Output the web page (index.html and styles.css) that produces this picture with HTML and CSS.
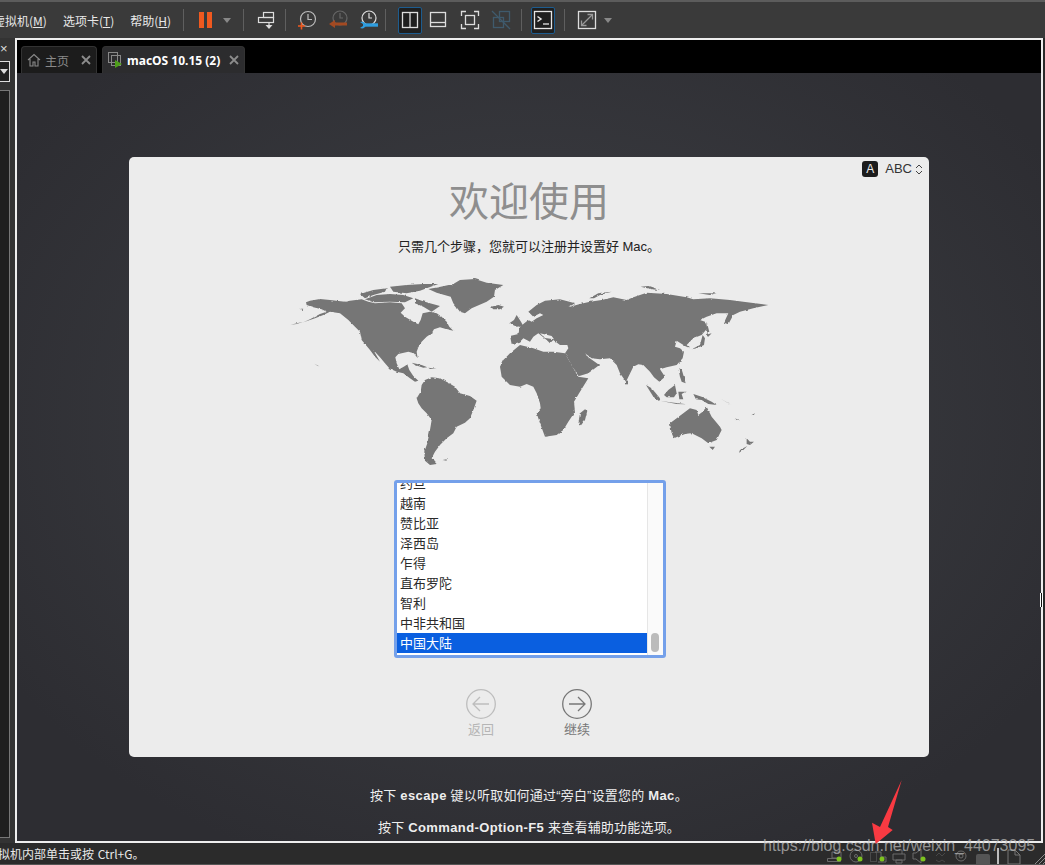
FILE: index.html
```html
<!DOCTYPE html>
<html lang="zh-CN">
<head>
<meta charset="utf-8">
<title>macOS 10.15 (2)</title>
<link rel="stylesheet" href="styles.css">
</head>
<body>
<div class="window">
  <header class="toolbar">
    <nav class="menu">
      <span class="menu-item first">虚拟机(<u>M</u>)</span>
      <span class="menu-item">选项卡(<u>T</u>)</span>
      <span class="menu-item">帮助(<u>H</u>)</span>
    </nav>
    <i class="sep"></i>
    <div class="group g-power">
      <svg width="30" height="20" viewBox="0 0 30 20"><rect x="8" y="2" width="5" height="16" fill="#f0591f"/><rect x="16" y="2" width="5" height="16" fill="#f0591f"/></svg>
      <i class="caret"></i>
    </div>
    <i class="sep"></i>
    <div class="group g-send">
      <svg width="20" height="20" viewBox="0 0 20 20" fill="none" stroke="#ddd" stroke-width="1.2"><rect x="8.500" y="2.500" width="10" height="5"/><rect x="3.500" y="7.500" width="15" height="5"/><path d="M10.500 15h7L14 19z" fill="#ddd" stroke="none"/><path d="M14 13v3"/></svg>
    </div>
    <i class="sep"></i>
    <div class="group g-snap">
      <svg width="30" height="22" viewBox="0 0 30 22" fill="none"><circle cx="16" cy="10" r="7.500" stroke="#bbb" stroke-width="1.200"/><path d="M16 5v5.500h4" stroke="#bbb" stroke-width="1.200"/><path d="M6 17h7M9.500 13.500v7" stroke="#f0591f" stroke-width="1.600"/></svg>
      <svg width="30" height="22" viewBox="0 0 30 22" fill="none"><circle cx="17" cy="9" r="7" stroke="#666" stroke-width="1.200"/><path d="M17 4v5h3" stroke="#666" stroke-width="1.200"/><path d="M11 15h13" stroke="#a34a22" stroke-width="3"/><path d="M6 15l6-4v8z" fill="#a34a22"/></svg>
      <svg width="30" height="22" viewBox="0 0 30 22" fill="none"><circle cx="15" cy="9" r="7" stroke="#ddd" stroke-width="1.200"/><path d="M15 4v5h3" stroke="#ddd" stroke-width="1.200"/><path d="M10 16h14" stroke="#2f9ee0" stroke-width="3.400"/><path d="M6 13c3-1 5 0 6 3-1 3-3 4-6 3l3-2v-2z" fill="#2f9ee0"/></svg>
    </div>
    <i class="sep"></i>
    <div class="group g-view">
      <span class="active-btn"><svg width="18" height="18" viewBox="0 0 18 18" fill="none" stroke="#ddd" stroke-width="1.300"><rect x="1.500" y="1.500" width="15" height="15"/><path d="M9 1.500v15"/></svg></span>
      <svg width="32" height="18" viewBox="0 0 32 18" fill="none" stroke="#ddd" stroke-width="1.300"><rect x="8.500" y="1.500" width="15" height="14"/><path d="M8.500 11.500h15"/></svg>
      <svg width="32" height="20" viewBox="0 0 32 20" fill="none" stroke="#ddd" stroke-width="1.300"><path d="M7.500 6V1.500H12M20 1.500h4.500V6M24.500 14v4.500H20M12 18.500H7.500V14"/><rect x="11.500" y="5.500" width="9" height="9"/></svg>
      <svg width="30" height="20" viewBox="0 0 30 20" fill="none" stroke="#3f5a6c" stroke-width="1.300"><rect x="13.500" y="1.500" width="10" height="10"/><rect x="7.500" y="7.500" width="10" height="10"/><path d="M6 1l18 18"/></svg>
    </div>
    <i class="sep"></i>
    <div class="group g-term">
      <span class="active-btn"><svg width="20" height="20" viewBox="0 0 20 20" fill="none" stroke="#e6e6e6" stroke-width="1.300"><rect x="1.500" y="1.500" width="17" height="17"/><path d="M4.500 6.500l3.500 2.500-3.500 2.500" stroke-width="1.500"/><path d="M10 14h6"/></svg></span>
    </div>
    <i class="sep"></i>
    <div class="group g-full">
      <svg width="20" height="20" viewBox="0 0 20 20" fill="none" stroke="#ddd" stroke-width="1.300"><rect x="1.500" y="1.500" width="17" height="17"/><path d="M5 15L15 5" stroke="#999"/><path d="M10.500 4.500h5v5M4.500 10.500v5h5" stroke="#999"/></svg>
      <i class="caret"></i>
    </div>
  </header>

  <div class="main">
    <aside class="sidebar">
      <div class="side-x">×</div>
      <div class="side-select"><i class="side-caret"></i></div>
      <div class="side-panel"></div>
    </aside>
    <section class="frame">
      <div class="tabs">
        <div class="tab tab-home">
          <svg width="14" height="14" viewBox="0 0 14 14" fill="none" stroke="#8a8a8a" stroke-width="1.100"><path d="M1 7l6-5.500L13 7M3 6v7h3V9h2v4h3V6"/></svg>
          <span class="tab-label">主页</span>
          <svg class="tab-close" width="10" height="10" viewBox="0 0 10 10" stroke="#8c8c8c" stroke-width="1.800"><path d="M1 1l8 8M9 1l-8 8"/></svg>
        </div>
        <div class="tab tab-vm">
          <svg width="15" height="16" viewBox="0 0 15 16" fill="none"><rect x=".5" y=".5" width="9" height="10" stroke="#888"/><rect x="3.500" y="3.500" width="9" height="10" stroke="#888"/><path d="M7 8l7 4-7 4z" fill="#4e9e1a"/></svg>
          <span class="tab-label strong">macOS 10.15 (2)</span>
          <svg class="tab-close" width="10" height="10" viewBox="0 0 10 10" stroke="#8c8c8c" stroke-width="1.800"><path d="M1 1l8 8M9 1l-8 8"/></svg>
        </div>
      </div>
      <div class="guest">
        <div class="card">
          <div class="input-source"><span class="input-a">A</span><span>ABC</span><svg width="8" height="13" viewBox="0 0 8 13" fill="none" stroke="#444" stroke-width="1"><path d="M1 5L4 2l3 3M1 8l3 3 3-3"/></svg></div>
          <h1 class="title">欢迎使用</h1>
          <p class="subtitle">只需几个步骤，您就可以注册并设置好 Mac。</p>
          <svg class="map" width="490" height="200" viewBox="290 270 490 200" fill="#767676">
            <defs>
              <filter id="coast" filterUnits="userSpaceOnUse" x="290" y="270" width="490" height="200">
                <feTurbulence type="fractalNoise" baseFrequency=".22" numOctaves="2" seed="4"/>
                <feDisplacementMap in="SourceGraphic" scale="2.4" xChannelSelector="R" yChannelSelector="G"/>
                <feGaussianBlur stdDeviation=".3"/>
              </filter>
            </defs>
            <g filter="url(#coast)">
              <g transform="translate(290 270) scale(.3333)">
                <path d="M48,97 60,92 90,87 120,90 165,95 180,92 215,88 235,95 255,100 300,97 335,100 345,115 332,128 345,140 370,155 385,163 392,150 398,130 420,125 440,130 455,140 470,155 478,170 490,182 470,178 450,172 432,178 425,190 410,200 395,215 385,232 380,245 383,265 372,250 355,245 325,252 316,262 320,280 328,298 345,288 352,283 358,300 370,318 385,332 375,335 360,325 340,310 320,305 298,295 285,280 270,262 250,240 270,275 255,260 240,240 215,210 210,185 195,170 175,150 150,130 120,125 100,135 75,145 40,157 60,148 90,132 110,125 95,118 70,112 50,105Z"/>
                <path d="M2,164 40,155 20,162Z"/>
                <path d="M28,116 40,116 38,120Z"/>
                <path d="M73,281 92,291 80,286Z"/>
                <path d="M210,72 250,60 290,55 285,65 250,75 225,85Z"/>
                <path d="M300,50 350,45 400,42 445,42 410,55 390,62 350,70 310,65Z"/>
                <path d="M225,88 260,75 300,72 340,75 370,85 345,97 300,95 250,97Z"/>
                <path d="M375,85 395,92 420,100 450,108 425,125 400,110 375,100Z"/>
                <path d="M415,57 445,52 490,42 510,30 555,27 590,38 640,45 615,60 612,80 590,95 545,115 525,130 510,125 490,100 482,80 440,68Z"/>
                <path d="M603,110 625,105 642,110 630,118 610,118Z"/>
                <path d="M365,278 395,285 412,292 400,293 375,285Z"/>
                <path d="M415,293 440,296 420,297Z"/>
                <path d="M380,385 392,365 395,345 405,330 425,322 450,325 475,338 495,350 510,370 540,378 560,392 550,420 540,445 525,458 500,470 490,490 470,505 450,525 435,545 425,565 440,582 420,585 405,572 403,545 412,520 420,480 425,450 410,430 395,415 385,400Z"/>
                <path d="M458,570 470,568 470,572Z"/>
                <path d="M658,160 672,150 680,135 693,155 700,168 680,170Z"/>
              </g>
              <g transform="translate(520 270) scale(.3333)">
                <path d="M40,235 0,225 -30,250 -50,270 -60,290 -55,320 -30,345 0,350 20,342 40,350 50,370 60,400 62,415 50,430 60,460 75,500 110,495 130,480 145,455 165,425 162,395 180,365 205,325 175,320 160,295 135,250 100,245 70,245Z"/>
                <path d="M195,418 202,422 195,450 183,466 175,460 180,430Z"/>
                <path fill-rule="evenodd" d="M-30,198 -5,192 0,170 25,150 35,155 50,145 70,135 60,130 40,140 25,125 50,105 75,92 120,88 165,100 145,112 180,102 210,95 245,90 280,82 320,90 340,82 380,68 440,72 500,82 520,88 570,85 630,90 670,95 745,105 700,115 660,125 640,135 625,163 612,158 625,130 590,130 560,140 540,150 555,155 562,175 545,195 520,205 500,225 510,235 495,228 470,212 465,230 480,235 492,245 488,265 470,285 440,292 420,298 435,320 418,335 402,322 390,305 370,285 355,283 340,290 318,335 300,310 290,285 270,265 240,268 215,265 195,250 205,262 238,285 205,310 178,318 160,295 135,250 145,235 142,225 120,225 100,210 90,220 80,210 55,190 40,200 30,215 10,205 0,215 -25,222Z M60,190 95,198 102,208 75,204Z"/>
                <path d="M208,85 235,70 275,65 240,75 222,85Z"/>
                <path d="M362,50 385,48 420,60 395,58Z"/>
                <path d="M535,70 590,70 570,75Z"/>
                <path d="M560,155 568,185 558,190Z"/>
                <path d="M515,238 540,225 548,195 555,205 552,225 530,235Z"/>
                <path d="M555,195 575,190 565,200Z"/>
                <path d="M478,270 483,272 478,280Z"/>
                <path d="M475,295 485,298 490,315 497,340 485,335 480,320Z"/>
                <path d="M378,345 395,355 420,385 420,395 400,380Z"/>
                <path d="M420,392 450,397 500,403 470,402Z"/>
                <path d="M432,375 445,360 465,345 470,370 462,382 440,382Z"/>
                <path d="M475,365 497,365 485,372 490,388 478,388Z"/>
                <path d="M520,372 545,380 575,395 590,405 565,402 545,390 528,388Z"/>
                <path d="M600,385 635,405 620,397Z"/>
                <path d="M645,445 660,452 650,450Z"/>
                <path d="M695,435 705,430 700,437Z"/>
                <path d="M318,332 324,332 324,343 318,343Z"/>
                <path d="M450,460 470,445 490,430 510,415 530,420 535,435 548,425 560,410 575,440 600,470 605,480 590,510 565,520 545,505 515,490 490,493 462,505 455,490Z"/>
                <path d="M568,530 585,530 578,540Z"/>
                <path d="M680,505 690,515 702,515 690,525 680,522Z"/>
                <path d="M682,528 670,540 657,548 660,540Z"/>
              </g>
            </g>
          </svg>
          <div class="listbox">
            <ul class="rows">
              <li>约旦</li>
              <li>越南</li>
              <li>赞比亚</li>
              <li>泽西岛</li>
              <li>乍得</li>
              <li>直布罗陀</li>
              <li>智利</li>
              <li>中非共和国</li>
              <li class="selected">中国大陆</li>
            </ul>
            <div class="scrollbar"><i class="thumb"></i></div>
          </div>
          <div class="nav">
            <div class="nav-btn off">
              <svg width="30" height="30" viewBox="0 0 30 30" fill="none" stroke="#bdbdbd" stroke-width="1.300"><circle cx="15" cy="15" r="14.300"/><path d="M23 15H7M14 8l-7 7 7 7"/></svg>
              <span>返回</span>
            </div>
            <div class="nav-btn">
              <svg width="30" height="30" viewBox="0 0 30 30" fill="none" stroke="#777" stroke-width="1.300"><circle cx="15" cy="15" r="14.300"/><path d="M7 15h16M16 8l7 7-7 7"/></svg>
              <span>继续</span>
            </div>
          </div>
        </div>
        <p class="hint h1">按下 <b class="key">escape</b> 键以听取如何通过“旁白”设置您的 <b class="key">Mac</b>。</p>
        <p class="hint h2">按下 <b class="key">Command-Option-F5</b> 来查看辅助功能选项。</p>
      </div>
    </section>
  </div>

  <footer class="status">
    <span class="status-text">拟机内部单击或按 Ctrl+G。</span>
    <div class="tray">
      <svg width="218" height="16" viewBox="827 848 218 16" fill="none" stroke="#6a6a6a" stroke-width="1">
        <path d="M832 852h9v6h-9zM827.500 858.500h13v3h-13z"/>
        <circle cx="856" cy="856" r="6"/><circle cx="856" cy="856" r="1.500"/>
        <path d="M870.500 852.500h6v9h-6z" stroke-dasharray="1 1"/><path d="M875 852h6v5h5v5h-8"/>
        <path d="M893 854h12v6h-12zM896 850h6v4M896 860h6v3h-6z"/>
        <path d="M913 853v6h3l5 4V849l-5 4z"/>
        <path d="M936 856l3-3 3 3 3-3M936 860l3 2 3-2 3 2" stroke="#484848"/>
        <circle cx="961" cy="856" r="5"/><circle cx="961" cy="856" r="2"/>
        <path d="M1008 850h7l5 5v9h-12zM1015 850v5h5" stroke="#777"/>
        <path d="M1034 865l11-11M1038 865l7-7M1042 865l3-3" stroke="#8a8a8a"/>
        <path d="M976 856q0-2 2-2h10q2 0 2 2v8h-14z" fill="#555" stroke="none"/>
        <path d="M998 848v16" stroke="#eee" stroke-width="1.500"/>
        <circle cx="839" cy="859" r="2.500" fill="#7ec41f" stroke="none"/>
        <circle cx="860" cy="859" r="2.500" fill="#7ec41f" stroke="none"/>
        <circle cx="882" cy="859" r="2.500" fill="#7ec41f" stroke="none"/>
        <circle cx="923" cy="859" r="2.500" fill="#7ec41f" stroke="none"/>
      </svg>
    </div>
  </footer>

  <div class="watermark">https://blog.csdn.net/weixin_44073095</div>
  <svg class="arrow" width="36" height="70" viewBox="0 0 36 70"><path d="M33.700 1L20 48l4.700 3L7.700 65 4 43.700l8 4.300Z" fill="#f93a42"/></svg>
  <i class="resize-cursor"></i>
</div>
</body>
</html>
```
FILE: styles.css
```css
* { box-sizing: border-box; }
html, body { margin: 0; padding: 0; }
body {
  width: 1045px;
  height: 865px;
  overflow: hidden;
  background: #2a2a2a;
  font-family: "Noto Sans CJK SC", "Noto Sans", sans-serif;
}
.window {
  position: relative;
  width: 1045px;
  height: 865px;
  display: flex;
  flex-direction: column;
  overflow: hidden;
}

/* toolbar */
.toolbar {
  height: 38px;
  flex: none;
  display: flex;
  align-items: center;
  background: #3a3a3a;
  border-top: 2px solid #5c5c5c;
  color: #eee;
}
.menu { display: flex; width: 183px; flex: none; font-size: 12px; color: #e8e8e8; white-space: nowrap; }
.menu-item { margin-left: 16px; }
.menu-item.first { margin-left: -7px; }
.sep { width: 1px; height: 22px; background: #5f5f5f; flex: none; }
.group { display: flex; align-items: center; flex: none; height: 36px; }
.group svg { flex: none; }
.caret {
  width: 0; height: 0; flex: none;
  border-left: 4px solid transparent;
  border-right: 4px solid transparent;
  border-top: 5px solid #888;
}
.g-power { width: 59px; padding-left: 7px; }
.g-power .caret { margin-left: 2px; }
.g-send { width: 41px; justify-content: center; }
.g-snap { width: 99px; padding-left: 6px; gap: 1px; }
.g-view { width: 135px; padding-left: 12px; }
.g-term { width: 42px; padding-left: 9px; }
.g-full { width: 60px; padding-left: 12px; gap: 7px; }
.active-btn {
  width: 24px; height: 27px; flex: none;
  display: flex; align-items: center; justify-content: center;
  background: #1f1f1f;
  border: 1px solid #1d5c8f;
  border-radius: 2px;
}

/* main */
.main { flex: 1; min-height: 0; display: flex; }
.sidebar {
  width: 15px; flex: none;
  background: #333;
  display: flex; flex-direction: column;
  overflow: hidden;
}
.side-x { height: 23px; color: #ddd; font-size: 13px; line-height: 22px; font-family: "Liberation Sans", sans-serif; }
.side-select {
  width: 10px; height: 21px; flex: none;
  border: 1px solid #ddd; border-left: 0;
  background: #222;
  position: relative;
}
.side-caret { position: absolute; left: 0; top: 7px; width: 0; height: 0;
  border-left: 4px solid transparent; border-right: 4px solid transparent; border-top: 5px solid #ddd; }
.side-panel { margin-top: 8px; width: 10px; height: 748px; flex: none; background: #1f1f1f; border: 1px solid #777; border-left: 0; }
.frame {
  width: 1028px; flex: none;
  border: 2px solid #eee;
  display: flex; flex-direction: column;
  background: #000;
}
.tabs { height: 33px; flex: none; display: flex; align-items: flex-end; gap: 5px; padding-left: 4px; background: #000; }
.tab {
  height: 27px;
  display: flex; align-items: center;
  border: 1px solid #333; border-bottom: 0;
  border-radius: 4px 4px 0 0;
  padding-left: 5px;
  font-size: 12px;
}
.tab-home { width: 76px; background: #1c1c1c; color: #8a8a8a; }
.tab-vm { width: 143px; background: #2c2c2e; color: #fff; }
.tab-label { margin-left: 4px; flex: 1; white-space: nowrap; }
.tab-label.strong { font-weight: 700; font-family: "Noto Sans", sans-serif; font-size: 12px; }
.tab-close { margin-right: 5px; flex: none; }

.guest {
  flex: 1; min-height: 0;
  padding-top: 84px;
  background: radial-gradient(ellipse 620px 480px at 50% 45%, #3f4045 0%, #37383d 45%, #2d2d32 100%);
}

/* card */
.card {
  position: relative;
  width: 800px; height: 600px;
  margin: 0 auto;
  padding-top: 18px;
  background: #ececec;
  border-radius: 5px;
  display: flex; flex-direction: column; align-items: center;
}
.input-source {
  position: absolute; top: 4px; right: 6px;
  display: flex; align-items: center; gap: 7px;
  font-size: 13px; line-height: 16px; color: #333;
  font-family: "Liberation Sans", sans-serif;
}
.input-source svg { margin-left: -4px; }
.input-a {
  width: 16px; height: 16px; border-radius: 3px;
  background: #1c1c1c; color: #eee;
  text-align: center; font-size: 12px; line-height: 16px;
}
.title { margin: 0; font-size: 40px; line-height: 48px; font-weight: 400; color: #8e8e8e; }
.subtitle {
  margin: 14px 0 0; font-size: 13px; line-height: 20px; color: #222;
  font-family: "Liberation Sans", "Noto Sans CJK SC", sans-serif;
}
.map { margin: 13px 0 0 12px; flex: none; }
.listbox {
  margin: 10px 0 0 2px;
  width: 272px; height: 178px; flex: none;
  border: 3px solid #74a0ea;
  border-radius: 3px;
  background: #fff;
  display: flex;
  overflow: hidden;
}
.rows { list-style: none; margin: -10px 0 0; padding: 0; width: 250px; flex: none; }
.rows li { height: 20px; padding-left: 3px; font-size: 13px; line-height: 20px; color: #2a2a2a; }
.rows li.selected { background: #0a5fe0; color: #fff; }
.scrollbar { flex: 1; background: #fafafa; border-left: 1px solid #e6e6e6; position: relative; }
.thumb { position: absolute; left: 3px; top: 150px; width: 8px; height: 19px; border-radius: 4px; background: #bbb; }
.nav { margin-top: 31px; display: flex; gap: 36px; }
.nav-btn { width: 60px; display: flex; flex-direction: column; align-items: center; font-size: 13px; line-height: 18px; color: #777; }
.nav-btn svg { margin-bottom: 1px; }
.nav-btn.off { color: #b5b5b5; }

.hint {
  margin: 0; text-align: center; font-size: 13px; line-height: 20px; color: #eee; letter-spacing: .2px;
  font-family: "Liberation Sans", "Noto Sans CJK SC", sans-serif;
}
.key { font-weight: 700; letter-spacing: .4px; }
.h1 { margin-top: 29px; }
.h2 { margin-top: 12px; }

/* status */
.status {
  height: 22px; flex: none;
  display: flex; align-items: center; justify-content: space-between;
  background: #2b2b2b;
  border-bottom: 1px solid #555;
  font-size: 12px; color: #e8e8e8;
}
.status-text { margin-left: -2px; white-space: nowrap; word-spacing: 1px; }
.tray { display: flex; width: 218px; height: 16px; flex: none; align-self: flex-end; overflow: hidden; }

/* overlays */
.watermark {
  position: absolute; left: 763px; top: 836px;
  font-family: "Liberation Sans", Arial, sans-serif;
  font-size: 16px; line-height: 20px; white-space: nowrap;
  color: rgba(190,190,190,.72);
}
.arrow { position: absolute; left: 868px; top: 779px; }
.resize-cursor { position: absolute; left: 1040px; top: 593px; width: 3px; height: 14px; border: 1px solid #fff; border-width: 0 1px; background: #111; }
```
